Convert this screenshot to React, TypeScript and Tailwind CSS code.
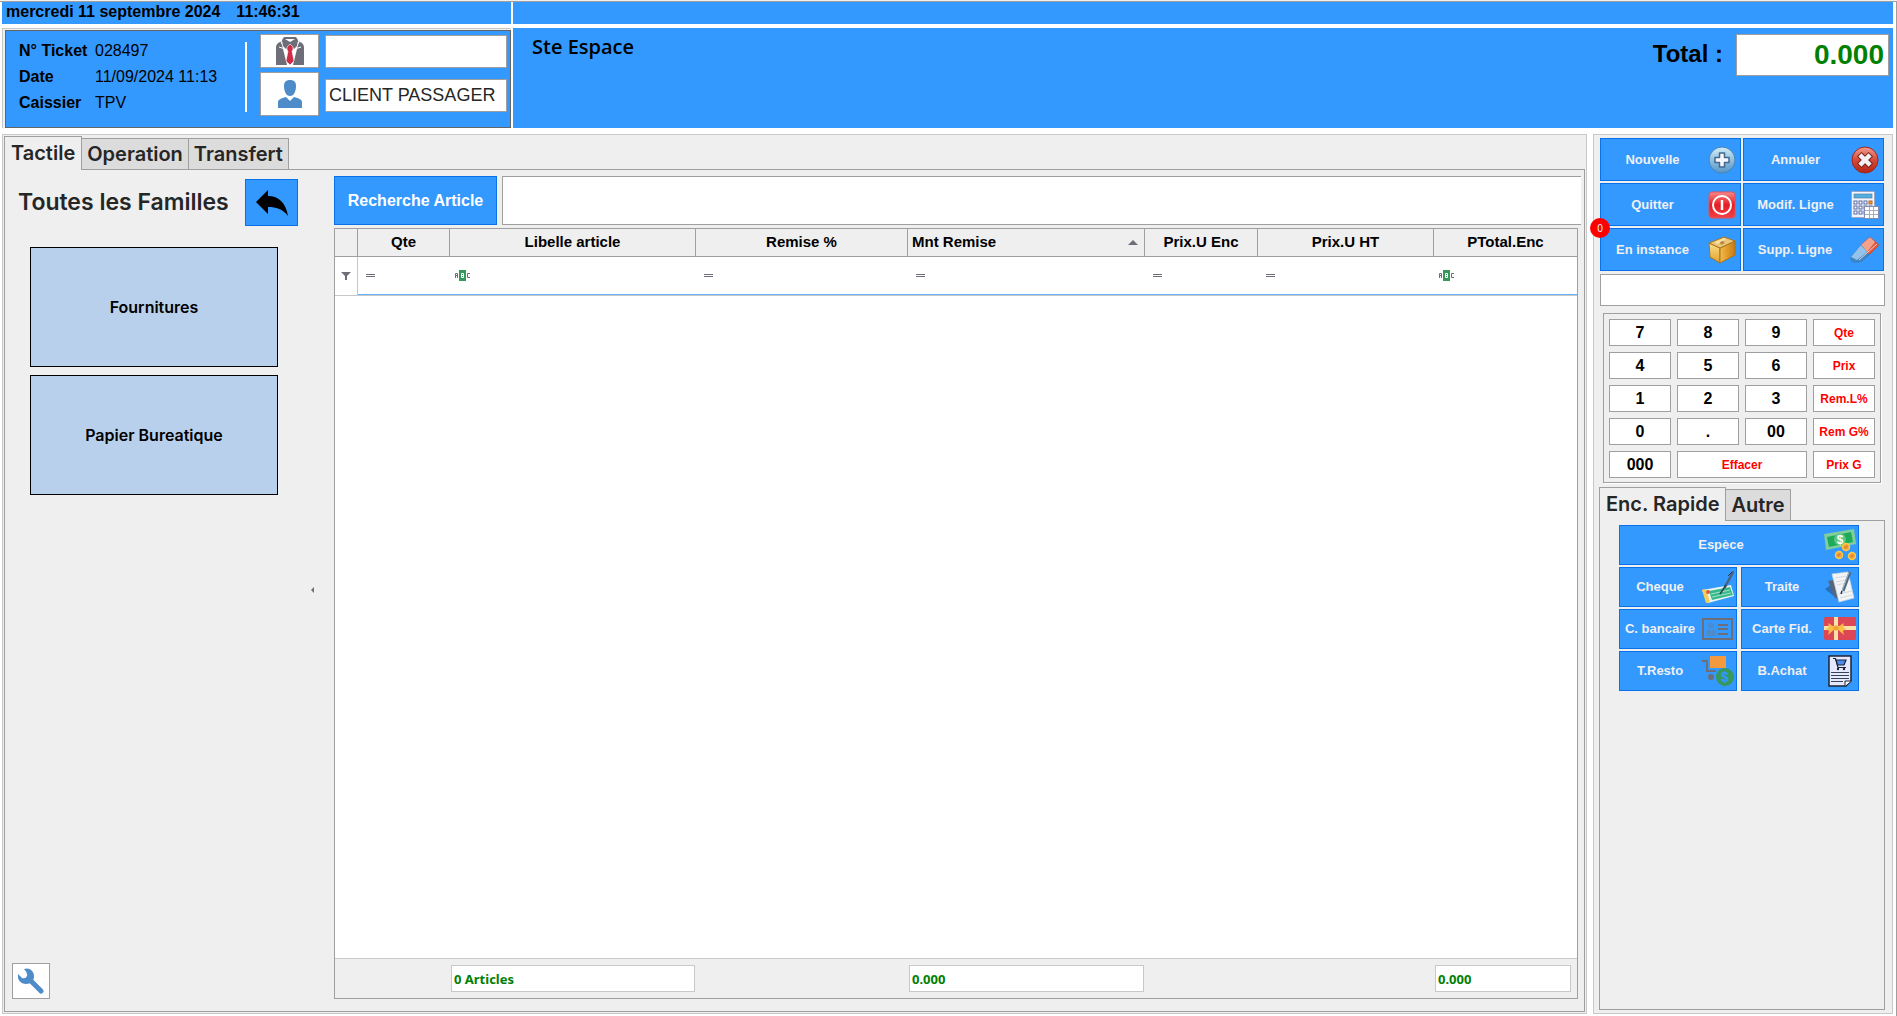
import { useState } from "react";
import type { ReactNode } from "react";

const gothic = "font-['Century_Gothic',Inter,sans-serif]";

/* ---------- ICONS ---------- */

const SuitIcon = () => (
  <svg width="28" height="28" viewBox="0 0 28 28" aria-hidden="true">
    <path d="M6 4 2 6Q0 8 0 10V28H28V10Q28 8 26 6L22 4Z" fill="#6d6e78" />
    <path d="M5 4 11 28H17L23 4 14 8Z" fill="#fff" />
    <path d="M5 5 9 12 3 10M23 5 19 12 25 10" fill="none" stroke="#fff" strokeWidth="1" />
    <path d="M8 0H20L22 3 21 9 18 12 14 8 10 12 7 9 6 3Z" fill="#6d6e78" />
    <path d="M9 2H19L14 5Z" fill="#fff" />
    <path d="M14 7 17 10V13L16 14 18 24 14 28 10 24 12 14 11 13V10Z" fill="#d02c46" stroke="#fff" strokeWidth="0.600" />
  </svg>
);

const UserIcon = () => (
  <svg width="24" height="28" viewBox="0 0 24 28" aria-hidden="true">
    <path d="M12 0c4 0 6 2 6 6 0 5-2 10-6 10S6 11 6 6c0-4 2-6 6-6Z" fill="#4d8bc9" />
    <path d="M0 28v-6c0-2 3-4 8-5l4 4 4-4c5 1 8 3 8 5v6Z" fill="#4d8bc9" />
  </svg>
);

const BackIcon = () => (
  <svg width="32" height="26" viewBox="0 0 32 26" aria-hidden="true">
    <path d="M0 12 12 0V6C23 6 30 13 32 26 27 19 20 17 12 17V24Z" fill="#000" />
  </svg>
);

const WrenchIcon = () => (
  <svg width="26" height="26" viewBox="0 0 26 26" aria-hidden="true">
    <path d="M12 12 23 23" stroke="#4d8bc9" strokeWidth="5" strokeLinecap="round" />
    <path d="M6 1c5-2 10 2 10 7 0 5-3 8-8 8-5 0-9-4-8-10l4 4q4 1 5-2 1-3-3-7Z" fill="#4d8bc9" />
  </svg>
);

const PlusIcon = () => (
  <svg width="28" height="28" viewBox="0 0 28 28" aria-hidden="true">
    <defs>
      <linearGradient id="plus" x1="0" y1="0" x2="0" y2="1">
        <stop offset="0" stopColor="#d2edf7" />
        <stop offset="0.5" stopColor="#8fc0e0" />
        <stop offset="1" stopColor="#5796c8" />
      </linearGradient>
    </defs>
    <circle cx="14" cy="14" r="13" fill="url(#plus)" stroke="#4b83b5" />
    <path d="M11.500 7h5v4.500H21v5h-4.500V21h-5v-4.500H7v-5h4.500Z" fill="#f4f7fc" stroke="#44688f" strokeWidth="1.500" strokeLinejoin="round" />
  </svg>
);

const CancelIcon = () => (
  <svg width="28" height="28" viewBox="0 0 28 28" aria-hidden="true">
    <defs>
      <linearGradient id="cancel" x1="0" y1="0" x2="0" y2="1">
        <stop offset="0" stopColor="#f0a093" />
        <stop offset="0.5" stopColor="#d64a39" />
        <stop offset="1" stopColor="#b32516" />
      </linearGradient>
    </defs>
    <circle cx="14" cy="14" r="13" fill="url(#cancel)" stroke="#9c2a20" />
    <path d="M10.500 10.500l7 7M17.500 10.500l-7 7" stroke="#7c1f17" strokeWidth="6.500" strokeLinecap="square" />
    <path d="M10.500 10.500l7 7M17.500 10.500l-7 7" stroke="#f4f1f4" strokeWidth="4.500" strokeLinecap="square" />
  </svg>
);

const PowerIcon = () => (
  <svg width="28" height="28" viewBox="0 0 28 28" aria-hidden="true">
    <defs>
      <linearGradient id="power" x1="0" y1="0" x2="0" y2="1">
        <stop offset="0" stopColor="#f58a8a" />
        <stop offset="0.5" stopColor="#e51b23" />
        <stop offset="1" stopColor="#f2424a" />
      </linearGradient>
    </defs>
    <rect x="1" y="1" width="26" height="26" rx="3" fill="url(#power)" stroke="#e0525c" />
    <circle cx="14" cy="14" r="9" fill="none" stroke="#fff" strokeWidth="2" />
    <path d="M14 9v10" stroke="#fff" strokeWidth="2.500" />
  </svg>
);

const CalcIcon = () => (
  <svg width="28" height="28" viewBox="0 0 28 28" aria-hidden="true">
    <rect x="0.500" y="0.500" width="23" height="26" rx="1" fill="#f3f5fb" stroke="#9aa6c6" />
    <rect x="3" y="3" width="18" height="4" fill="#4fb0df" stroke="#5e7fae" strokeWidth="0.700" />
    {[10, 15, 20].map((y) =>
      [3, 8, 13, 18].map((x) => (
        <rect
          key={`${x}-${y}`}
          x={x}
          y={y}
          width="3"
          height="3"
          fill={x === 18 && y === 10 ? "#f0a23a" : "#fff"}
          stroke={x === 18 && y === 10 ? "#b5651d" : "#5669a8"}
        />
      ))
    )}
    <rect x="13.500" y="15.500" width="14" height="12" fill="#fff" stroke="#7f8cb4" />
    <path d="M14 19.500h13M14 23.500h13M18.500 16v11M22.500 16v11" stroke="#a4adc8" />
  </svg>
);

const BoxIcon = () => (
  <svg width="28" height="28" viewBox="0 0 28 28" aria-hidden="true">
    <defs>
      <linearGradient id="boxLeft" x1="0" y1="0" x2="0" y2="1">
        <stop offset="0" stopColor="#fbe08a" />
        <stop offset="1" stopColor="#e0a02c" />
      </linearGradient>
      <linearGradient id="boxRight" x1="0" y1="0" x2="1" y2="0">
        <stop offset="0" stopColor="#f3bb48" />
        <stop offset="1" stopColor="#c97a12" />
      </linearGradient>
    </defs>
    <path d="M1 7 12 12V27L2 21Z" fill="url(#boxLeft)" stroke="#a8741a" strokeLinejoin="round" />
    <path d="M12 12 27 5V19L12 27Z" fill="url(#boxRight)" stroke="#a8741a" strokeLinejoin="round" />
    <path d="M1 7 16 1 27 5 12 12Z" fill="#edc679" stroke="#a8741a" strokeLinejoin="round" />
    <path d="M7 6 16 2 18 3 9 8Z" fill="#fbe3a4" />
    <path d="M12 6 15 5 17 7 13 9Z" fill="#b88641" />
  </svg>
);

const EraserIcon = () => (
  <svg width="29" height="26" viewBox="0 0 29 26" aria-hidden="true">
    <path d="M11 8 19 1q1-1 2 0l7 6q1 1 0 2l-9 9Z" fill="#e2563f" stroke="#c0513d" strokeLinejoin="round" />
    <path d="M11 8 19 1q1-1 2 0l4 4-8 10Z" fill="#f3a28e" />
    <path d="M11 8 19 18 12 24q-1 1-3 1H3q-3-1-2-5Z" fill="#3f86c6" stroke="#3c7db8" strokeLinejoin="round" />
    <path d="M11 8 17 15 7 23 1 20Z" fill="#93c3ea" />
    <path d="M9 23 27 7" stroke="#f3d2cb" strokeWidth="1" />
  </svg>
);

const CashIcon = () => (
  <svg width="32" height="32" viewBox="0 0 32 32" aria-hidden="true">
    <path d="M0 5 30 0 32 15 2 21Z" fill="#7fce9b" />
    <path d="M3 8 27 3 29 13 5 18Z" fill="#1faa59" />
    <circle cx="16" cy="10.500" r="6" fill="#58c783" />
    <text x="16" y="15" textAnchor="middle" className="fill-white text-[12px] font-bold">$</text>
    {[[22, 18], [15, 26], [28, 27]].map(([x, y]) => (
      <g key={x}>
        <circle cx={x} cy={y} r="3.500" fill="#f0a040" stroke="#fbc944" strokeWidth="1.500" />
        <path d={`M${x - 1.5} ${y + 1}l3-2`} stroke="#e07a2a" strokeWidth="1.500" />
      </g>
    ))}
  </svg>
);

const ChequeIcon = () => (
  <svg width="32" height="32" viewBox="0 0 32 32" aria-hidden="true">
    <path d="M0 19 29 14 32 25 6 32Z" fill="#e9f5ec" />
    <path d="M0 19 4 18 8 31 4 32Z" fill="#f5cf55" />
    <path d="M7 20 28 16 31 24 10 29Z" fill="#36b98a" />
    <path d="M9 23 28 19M10 26l19-4" stroke="#bfe8d4" strokeWidth="0.800" />
    <circle cx="6" cy="21" r="2" fill="#e5533f" />
    <path d="M31 1 23 16" stroke="#4a627d" strokeWidth="2.500" strokeLinecap="round" />
    <path d="M24 14 18 23" stroke="#2c4057" strokeWidth="1.500" />
    <path d="M26 5 30 1" stroke="#22354a" />
  </svg>
);

const PapersIcon = () => (
  <svg width="32" height="32" viewBox="0 0 32 32" aria-hidden="true">
    <path d="M1 18 10 12 17 31Z" fill="#2c6fb8" />
    <path d="M4 10 20 7 18 28 11 27Z" fill="#57687d" />
    <path d="M8 3 24 1 30 27 15 31Z" fill="#f2f4f6" stroke="#cfd5dc" strokeWidth="0.700" />
    <path d="M11 7 22 5M12 11l10-2M13 14l9-2M15 23l13-3M16 27l12-3" stroke="#ccd2d9" strokeWidth="0.800" />
    <path d="M26 1 19 20" stroke="#516a80" strokeWidth="3" />
    <path d="M25 1 18 20" stroke="#a9bdcb" strokeWidth="1" />
    <path d="M18 20 17 23" stroke="#23364a" strokeWidth="1.500" />
  </svg>
);

const CardIcon = () => (
  <svg width="32" height="24" viewBox="0 0 32 24" aria-hidden="true">
    <rect x="1" y="2" width="29" height="20" fill="none" stroke="#6d6e78" strokeWidth="2" />
    <circle cx="9" cy="8.500" r="3" fill="#4d8bc9" />
    <path d="M4 19v-4q1-3 3-3l2 2 2-2q3 0 3 3v4Z" fill="#4d8bc9" />
    <path d="M16 8h10M16 12h10M16 17h10" stroke="#6d6e78" strokeWidth="2" />
  </svg>
);

const GiftCardIcon = () => (
  <svg width="32" height="24" viewBox="0 0 32 24" aria-hidden="true">
    <rect width="32" height="23" rx="2" fill="#dc4655" />
    <path d="M10 0h4v23h-4ZM0 9h32v4H0Z" fill="#fbe0a8" />
    <path d="M12 11 4 6 5 10 2 12 5 14 4 18ZM12 11l8-5-1 4 3 2-3 2 1 4Z" fill="#f9bd45" />
    <circle cx="12" cy="11" r="2.500" fill="#f0a432" />
  </svg>
);

const CartMoneyIcon = () => (
  <svg width="32" height="32" viewBox="0 0 32 32" aria-hidden="true">
    <path d="M0 6H5V16H14" fill="none" stroke="#6d6e78" strokeWidth="2" />
    <rect x="8" y="1" width="16" height="12" fill="#f39a3e" />
    <circle cx="9" cy="22" r="3" fill="#6d6e78" />
    <circle cx="23" cy="22" r="9" fill="#36985a" />
    <text x="23" y="27" textAnchor="middle" className="fill-[#3399ff] text-[14px] font-bold">$</text>
  </svg>
);

const InvoiceIcon = () => (
  <svg width="24" height="32" viewBox="0 0 24 32" aria-hidden="true">
    <path d="M1 1H23V26L18 31H1Z" fill="#e4e9ff" stroke="#1d2335" strokeWidth="1.500" />
    <path d="M17 31V26H23" fill="#fff" stroke="#1d2335" />
    <path d="M5 3.500H7.500L10 12.500H18" fill="none" stroke="#1d2335" strokeWidth="1.200" />
    <path d="M8 5H18L16 10H9.500Z" fill="#4c8cf0" stroke="#1d2335" strokeWidth="1.200" />
    <circle cx="10" cy="14" r="1.200" fill="#1d2335" />
    <circle cx="16" cy="14" r="1.200" fill="#1d2335" />
    <path d="M3 17.500h18M3 20.500h18M3 23.500h18M3 26.500h12" stroke="#3a4157" />
  </svg>
);

const FunnelIcon = () => (
  <svg width="10" height="8" viewBox="0 0 10 8" className="mx-auto" aria-hidden="true">
    <path d="M0 0h10L6 4v4H4V4Z" fill="#6d6e78" />
  </svg>
);

const EqualIcon = () => (
  <svg width="9" height="3" viewBox="0 0 9 3" aria-hidden="true">
    <path d="M0 0.500h9M0 2.500h9" stroke="#6d6e78" />
  </svg>
);

const AbcIcon = () => (
  <svg width="16" height="11" viewBox="0 0 16 11" fill="none" aria-hidden="true">
    <rect x="4" width="7" height="11" fill="#36985a" />
    <path d="M0.500 8V3.500H2.500V8M1 5.500h1" stroke="#6d6e78" />
    <path d="M6.500 3.500h2v4h-2ZM6.500 5.500h2" stroke="#fff" />
    <path d="M15 3.500H12.500v4H15" stroke="#6d6e78" />
  </svg>
);

/* ---------- DATA ---------- */

type Column = { name: string; width: number; filter: "equal" | "abc"; total?: string; sorted?: boolean };

const columns: Column[] = [
  { name: "Qte", width: 92, filter: "equal" },
  { name: "Libelle article", width: 246, filter: "abc", total: "0 Articles" },
  { name: "Remise %", width: 212, filter: "equal" },
  { name: "Mnt Remise", width: 237, filter: "equal", total: "0.000", sorted: true },
  { name: "Prix.U Enc", width: 113, filter: "equal" },
  { name: "Prix.U HT", width: 176, filter: "equal" },
  { name: "PTotal.Enc", width: 143, filter: "abc", total: "0.000" },
];

const actions = [
  { label: "Nouvelle", icon: <PlusIcon /> },
  { label: "Annuler", icon: <CancelIcon /> },
  { label: "Quitter", icon: <PowerIcon /> },
  { label: "Modif. Ligne", icon: <CalcIcon /> },
  { label: "En instance", icon: <BoxIcon />, badge: 0 },
  { label: "Supp. Ligne", icon: <EraserIcon /> },
];

const keys = [
  "7", "8", "9", "Qte",
  "4", "5", "6", "Prix",
  "1", "2", "3", "Rem.L%",
  "0", ".", "00", "Rem G%",
  "000", "Effacer", "Prix G",
];

const payments = [
  { label: "Espèce", icon: <CashIcon />, wide: true },
  { label: "Cheque", icon: <ChequeIcon /> },
  { label: "Traite", icon: <PapersIcon /> },
  { label: "C. bancaire", icon: <CardIcon /> },
  { label: "Carte Fid.", icon: <GiftCardIcon /> },
  { label: "T.Resto", icon: <CartMoneyIcon /> },
  { label: "B.Achat", icon: <InvoiceIcon /> },
];

/* ---------- PARTS ---------- */

type TabsProps = { names: string[]; active: string; onChange: (name: string) => void };

function Tabs({ names, active, onChange }: TabsProps) {
  return (
    <div role="tablist" className={`flex h-[33px] items-end text-[20px] leading-6 font-semibold text-[#262626] ${gothic}`}>
      {names.map((name) => (
        <button
          key={name}
          type="button"
          role="tab"
          aria-selected={name === active}
          onClick={() => onChange(name)}
          className={
            name === active
              ? "relative -mb-px h-[34px] border border-b-0 border-[#9f9f9f] bg-[#efefef] px-[6px] pb-[2px]"
              : "h-[31px] border border-b-0 border-l-0 border-[#9f9f9f] bg-[#dcdcdc] px-[5px]"
          }
        >
          {name}
        </button>
      ))}
    </div>
  );
}

function TileButton({ children, icon, className }: { children: ReactNode; icon: ReactNode; className: string }) {
  return (
    <button
      type="button"
      className={`relative flex items-center border border-[#0a72e8] bg-[#3399ff] text-[13px] font-bold text-[#f0f0f0] ${className}`}
    >
      {children}
      {icon}
    </button>
  );
}

const ColGroup = () => (
  <colgroup>
    <col style={{ width: 23 }} />
    {columns.map((c) => (
      <col key={c.name} style={{ width: c.width }} />
    ))}
  </colgroup>
);

function TicketTable() {
  return (
    <div className="mr-[6px] flex flex-1 flex-col border border-[#9f9f9f] bg-white">
      <table className="w-full table-fixed border-separate border-spacing-0 text-[15px] text-black">
        <ColGroup />
        <thead>
          <tr className="h-[28px] bg-[#efefef]">
            <th className="border-r border-b border-[#9f9f9f]" aria-label="Filtre"></th>
            {columns.map((c) => (
              <th key={c.name} className="border-r border-b border-[#9f9f9f] px-1 pb-px font-bold last:border-r-0">
                {c.sorted ? (
                  <span className="flex items-center justify-between pr-[2px]">
                    {c.name}
                    <svg width="10" height="5" viewBox="0 0 10 5" aria-hidden="true">
                      <path d="M0 5 5 0 10 5Z" fill="#6d6e78" />
                    </svg>
                  </span>
                ) : (
                  c.name
                )}
              </th>
            ))}
          </tr>
        </thead>
        <tbody>
          <tr className="h-[39px]">
            <td className="border-r border-b border-[#c8c8c8]">
              <FunnelIcon />
            </td>
            {columns.map((c) => (
              <td
                key={c.name}
                className={`border-b border-[#c8c8c8] pb-px shadow-[inset_0_-1px_0_#66b3ff] ${c.filter === "abc" ? "pl-[5px]" : "pl-2"}`}
              >
                {c.filter === "abc" ? <AbcIcon /> : <EqualIcon />}
              </td>
            ))}
          </tr>
        </tbody>
      </table>

      <div className="flex-1"></div>

      <table className="w-full table-fixed border-t border-[#c8c8c8] bg-[#efefef]">
        <ColGroup />
        <tbody>
          <tr className="h-[39px]">
            <td></td>
            {columns.map((c) => (
              <td key={c.name} className="py-[6px] px-px last:pr-[6px]">
                {c.total && (
                  <input
                    readOnly
                    aria-label={`Total ${c.name}`}
                    value={c.total}
                    className="block h-[27px] w-full border border-[#c8c8c8] bg-white px-[2px] font-['Noto_Sans',sans-serif] text-[13px] font-bold text-[#008000]"
                  />
                )}
              </td>
            ))}
          </tr>
        </tbody>
      </table>
    </div>
  );
}

export default function App() {
  const [tab, setTab] = useState("Tactile");
  const [payTab, setPayTab] = useState("Enc. Rapide");
  const [search, setSearch] = useState("");
  const [entry, setEntry] = useState("");
  const [seller, setSeller] = useState("");
  const [client, setClient] = useState("CLIENT PASSAGER");

  const pressKey = (key: string) => {
    if (key === "Effacer") setEntry("");
    else if (/^[0-9.]+$/.test(key)) setEntry(entry + key);
  };

  return (
    <div className="flex h-screen min-h-[760px] flex-col border-t border-[#f0f0f0] bg-white font-['Liberation_Sans',Arial,sans-serif]">
      <div className="flex min-h-0 flex-1 flex-col border-t border-r border-[#9f9f9f] pr-[3px] pb-[2px] pl-[2px]">

        {/* DATE BAR */}
        <div className="mb-1 flex h-[22px] gap-[2px] text-[16px] font-bold">
          <div className="flex w-[509px] items-center gap-4 bg-[#3399ff] pb-[2px] pl-1">
            <span>mercredi 11 septembre 2024</span>
            <span>11:46:31</span>
          </div>
          <div className="flex-1 bg-[#3399ff]"></div>
        </div>

        {/* HEADER */}
        <header className="mb-[6px] flex h-[100px] gap-[2px]">
          <div className="flex w-[509px] border-t border-l border-[#c8c8c8] bg-[#efefef] pt-px pl-[2px]">
            <div className="flex flex-1 border border-[#646464] bg-[#3399ff] pt-[3px] pr-[3px] pl-[13px]">
              <dl className="mt-1 grid h-[78px] w-[226px] grid-cols-[76px_1fr] content-between text-[16px] leading-[26px]">
                <dt className="font-bold">N° Ticket</dt>
                <dd>028497</dd>
                <dt className="font-bold">Date</dt>
                <dd>11/09/2024 11:13</dd>
                <dt className="font-bold">Caissier</dt>
                <dd>TPV</dd>
              </dl>
              <div className="mt-2 mr-[13px] h-[70px] w-[2px] bg-white"></div>
              <div className="mr-[6px] flex flex-col gap-1">
                <button type="button" aria-label="Vendeur" className="flex h-[34px] w-[59px] items-center justify-center border border-[#9f9f9f] bg-white">
                  <SuitIcon />
                </button>
                <button type="button" aria-label="Client" className="flex h-[44px] w-[59px] items-center justify-center border border-[#9f9f9f] bg-white">
                  <UserIcon />
                </button>
              </div>
              <div className="flex flex-1 flex-col gap-[11px] pt-px">
                <input
                  aria-label="Nom du vendeur"
                  value={seller}
                  onChange={(e) => setSeller(e.target.value)}
                  className="h-[33px] w-full border border-[#9f9f9f] bg-white px-[3px] text-[18px] text-[#262626]"
                />
                <input
                  aria-label="Nom du client"
                  value={client}
                  onChange={(e) => setClient(e.target.value)}
                  className="h-[33px] w-full border border-[#9f9f9f] bg-white px-[3px] text-[18px] text-[#262626]"
                />
              </div>
            </div>
          </div>

          <div className="flex flex-1 items-start justify-between bg-[#3399ff] pt-[6px] pr-1 pl-[19px]">
            <h1 className="font-['Trebuchet_MS','Open_Sans',sans-serif] text-[20px] leading-[26px] font-semibold">Ste Espace</h1>
            <div className="flex items-start gap-[13px]">
              <label htmlFor="total" className="pt-1 text-[24px] leading-8 font-bold">Total :</label>
              <input
                id="total"
                readOnly
                value="0.000"
                className="h-[42px] w-[153px] border border-[#9f9f9f] bg-white px-1 text-right text-[28px] font-bold text-[#008000]"
              />
            </div>
          </div>
        </header>

        <div className="flex min-h-0 flex-1 gap-[6px]">

          {/* TICKET */}
          <main className="flex min-w-0 flex-1 flex-col border border-[#c8c8c8] bg-[#efefef] p-px">
            <Tabs names={["Tactile", "Operation", "Transfert"]} active={tab} onChange={setTab} />
            <div className="flex min-h-0 flex-1 border border-[#9f9f9f]">
              <aside className="flex w-[329px] shrink-0 flex-col pt-[9px] pb-3">
                <div className="flex items-center pl-[13px]">
                  <h2 className={`w-[227px] text-[23px] font-semibold whitespace-nowrap text-[#262626] ${gothic}`}>Toutes les Familles</h2>
                  <button type="button" aria-label="Retour" className="flex h-[47px] w-[53px] items-center justify-center border border-[#0a72e8] bg-[#3399ff]">
                    <BackIcon />
                  </button>
                </div>
                <div className={`mt-[21px] ml-[25px] flex w-[248px] flex-col gap-2 text-[16px] font-semibold ${gothic}`}>
                  <button type="button" className="h-[120px] border border-black bg-[#b9d0ec]">Fournitures</button>
                  <button type="button" className="h-[120px] border border-black bg-[#b9d0ec]">Papier Bureatique</button>
                </div>
                <div className="flex flex-1 items-start justify-end pt-[92px] pr-5">
                  <svg width="3" height="6" viewBox="0 0 3 6" aria-hidden="true">
                    <path d="M3 0v6L0 3Z" fill="#6d6e78" />
                  </svg>
                </div>
                <button type="button" aria-label="Paramètres" className="ml-[7px] flex h-9 w-[38px] items-center justify-center border border-[#9f9f9f] bg-white">
                  <WrenchIcon />
                </button>
              </aside>

              <section className="flex min-w-0 flex-1 flex-col pt-[6px] pb-3">
                <div className="mb-[3px] flex h-[49px] gap-[5px] pr-[3px]">
                  <button type="button" className="w-[163px] border border-[#0a72e8] bg-[#3399ff] text-[16px] font-bold text-white">
                    Recherche Article
                  </button>
                  <input
                    aria-label="Recherche Article"
                    value={search}
                    onChange={(e) => setSearch(e.target.value)}
                    className="min-w-0 flex-1 border border-r-0 border-[#9f9f9f] bg-white px-2 text-[18px]"
                  />
                </div>
                <TicketTable />
              </section>
            </div>
          </main>

          {/* ACTIONS */}
          <aside className="flex w-[300px] shrink-0 flex-col border border-[#c8c8c8] bg-[#efefef] pt-[3px] pb-[3px]">
            <div className="mr-2 ml-[6px] grid grid-cols-2 gap-[2px]">
              {actions.map((a) => (
                <TileButton key={a.label} icon={a.icon} className="h-[43px] pr-1">
                  <span className="flex-1 pr-1">{a.label}</span>
                  {a.badge !== undefined && (
                    <span className="absolute -top-[11px] -left-[11px] flex size-5 items-center justify-center rounded-full bg-[#ff0000] font-['Noto_Sans',sans-serif] text-[10px] font-normal">
                      {a.badge}
                    </span>
                  )}
                </TileButton>
              ))}
            </div>

            <input
              aria-label="Saisie"
              value={entry}
              onChange={(e) => setEntry(e.target.value)}
              className="mt-[3px] mr-[7px] ml-[6px] h-8 border border-[#9f9f9f] bg-white px-2 text-[18px]"
            />

            <div className="mt-[7px] mr-[11px] ml-[9px] grid grid-cols-4 gap-[6px] border border-[#9f9f9f] p-[5px] pb-1 shadow-[1px_1px_0_#fff]">
              {keys.map((key) => (
                <button
                  key={key}
                  type="button"
                  onClick={() => pressKey(key)}
                  className={`h-[27px] border border-[#9f9f9f] bg-white font-bold ${
                    /^[0-9.]+$/.test(key) ? "text-[16px] text-black" : "text-[12px] text-[#ff0000]"
                  } ${key === "Effacer" ? "col-span-2" : ""}`}
                >
                  {key}
                </button>
              ))}
            </div>

            <div className="mt-1 mr-[7px] ml-[5px] flex flex-1 flex-col">
              <Tabs names={["Enc. Rapide", "Autre"]} active={payTab} onChange={setPayTab} />
              <div className="flex-1 border border-[#9f9f9f] pt-1 pr-[25px] pl-[19px]">
                <div className="grid grid-cols-2 gap-x-1 gap-y-[2px]">
                  {payments.map((p) => (
                    <TileButton
                      key={p.label}
                      icon={<span className="flex w-8 justify-center">{p.icon}</span>}
                      className={`h-10 pr-[2px] ${p.wide ? "col-span-2" : ""}`}
                    >
                      <span className="flex-1 pr-[2px] whitespace-nowrap">{p.label}</span>
                    </TileButton>
                  ))}
                </div>
              </div>
            </div>
          </aside>
        </div>
      </div>
    </div>
  );
}
